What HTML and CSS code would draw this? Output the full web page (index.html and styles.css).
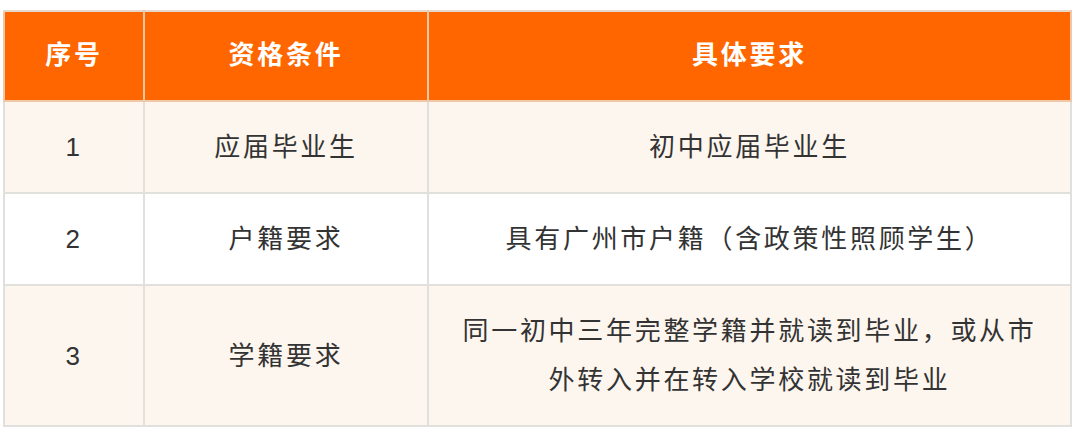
FILE: index.html
```html
<!DOCTYPE html>
<html lang="zh-CN">
<head>
<meta charset="utf-8">
<link rel="stylesheet" href="styles.css">
</head>
<body>
<table class="req-table">
  <colgroup>
    <col class="c1"><col class="c2"><col class="c3">
  </colgroup>
  <thead>
    <tr class="head-row">
      <th>序号</th>
      <th>资格条件</th>
      <th>具体要求</th>
    </tr>
  </thead>
  <tbody>
    <tr class="row-cream">
      <td class="num">1</td>
      <td>应届毕业生</td>
      <td>初中应届毕业生</td>
    </tr>
    <tr class="row-white">
      <td class="num">2</td>
      <td>户籍要求</td>
      <td>具有广州市户籍（含政策性照顾学生）</td>
    </tr>
    <tr class="row-cream">
      <td class="num">3</td>
      <td>学籍要求</td>
      <td class="wide">同一初中三年完整学籍并就读到毕业，或从市外转入并在转入学校就读到毕业</td>
    </tr>
  </tbody>
</table>
</body>
</html>
```
FILE: styles.css
```css
html, body {
  margin: 0;
  padding: 0;
  background: #ffffff;
}
body {
  padding: 10px 0 0 3px;
  font-family: "Liberation Sans", "Noto Sans CJK SC", sans-serif;
  color: #333333;
}
.req-table {
  border-collapse: collapse;
  width: 1067px;
  table-layout: fixed;
  border: 2px solid #e2e0dd;
}
.c1 { width: 140px; }
.c2 { width: 284px; }
.c3 { width: 643px; }
.req-table th,
.req-table td {
  border: 2px solid #e2e0dd;
  text-align: center;
  vertical-align: middle;
  font-size: 26px;
  line-height: 49px;
  letter-spacing: 2.7px;
  padding: 21px 20px 20px;
}
.head-row th {
  background: #ff6600;
  color: #ffffff;
  font-weight: bold;
  padding: 19px 20px 20px;
  border-color: #f0c8a8;
  border-top-color: #e8d8cc;
}
.head-row th + th {
  border-left-color: #e4d8d0;
}
.row-cream td { background: #fdf6ee; }
.row-white td { background: #ffffff; }
.num {
  letter-spacing: 0;
}
.wide {
  padding: 21px 28px 20px;
}
```
